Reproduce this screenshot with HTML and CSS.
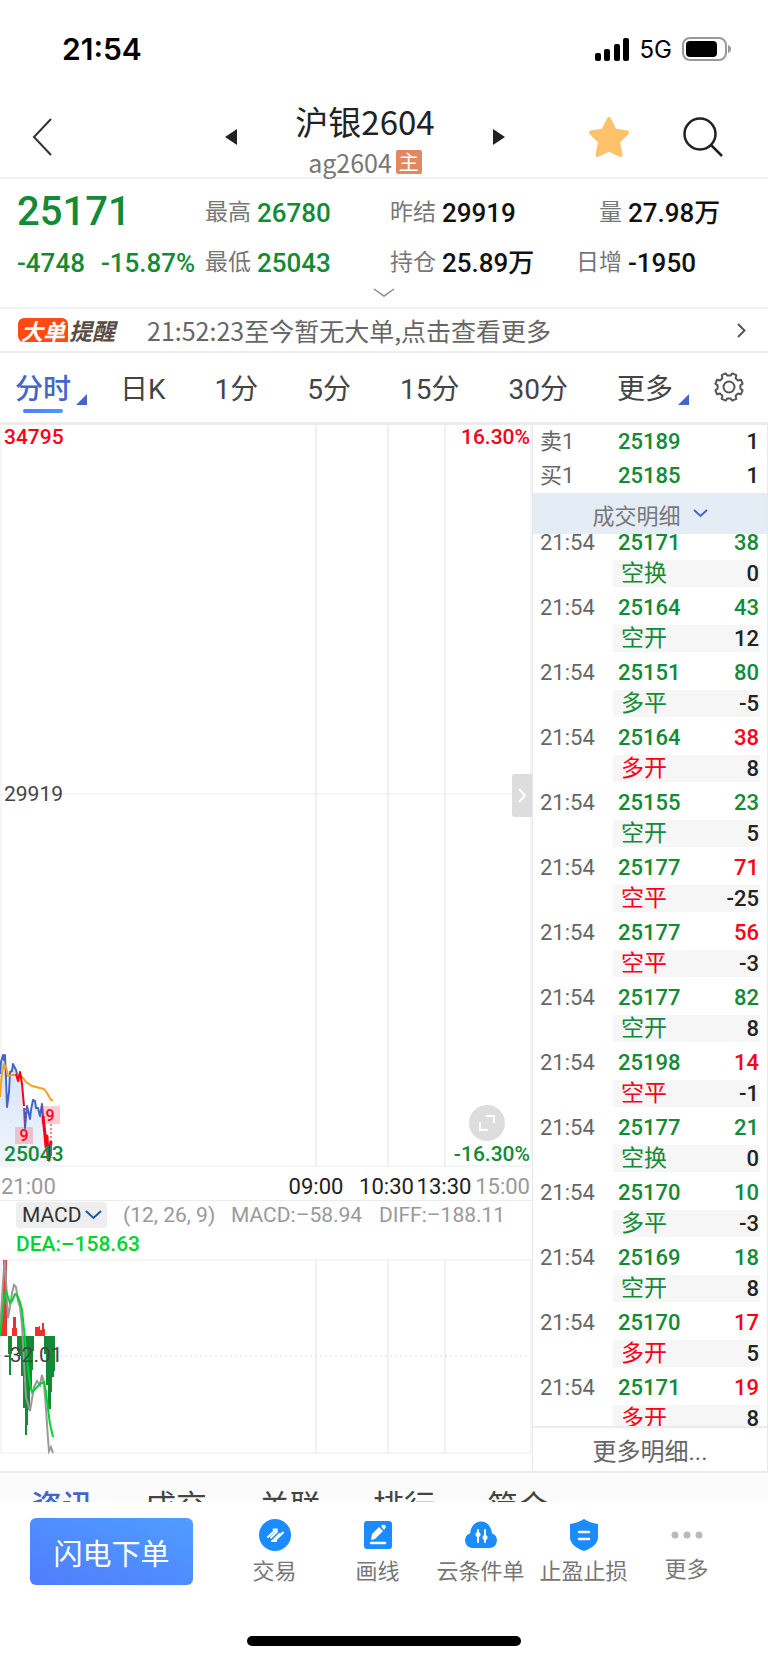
FILE: index.html
```
<!DOCTYPE html>
<html lang="zh-CN">
<head>
    <meta charset="UTF-8">
    <meta name="viewport" content="width=device-width, initial-scale=1.0">
    <title>沪银2604</title>
    <link rel="stylesheet" href="styles.css">
</head>
<body>

<div class="status-bar">
    <span class="clock">21:54</span>
    <div class="status-icons">
        <svg width="35" height="23" viewBox="0 0 35 23">
            <rect x="0" y="15" width="6" height="8" rx="2"/>
            <rect x="9" y="11" width="6" height="12" rx="2"/>
            <rect x="19" y="6" width="6" height="17" rx="2"/>
            <rect x="28" y="0" width="6" height="23" rx="2"/>
        </svg>
        <span class="network">5G</span>
        <svg width="49" height="24" viewBox="0 0 49 24">
            <rect x="1" y="1" width="43" height="22" rx="7" fill="none" stroke="#999" stroke-width="2"/>
            <rect x="4" y="4" width="31" height="16" rx="4"/>
            <path d="M46 8q3 1 3 4t-3 4z" fill="#999"/>
        </svg>
    </div>
</div>

<header class="nav">
    <button class="icon-btn back" aria-label="返回">
        <svg width="20" height="38" viewBox="0 0 20 38"><path d="M19 1L2 19l17 18" fill="none" stroke="#333" stroke-width="2"/></svg>
    </button>
    <button class="icon-btn prev" aria-label="上一个">
        <svg width="12" height="16" viewBox="0 0 12 16"><path d="M12 0v16L0 8z" fill="#222"/></svg>
    </button>
    <div class="nav-title">
        <h1>沪银2604</h1>
        <p>ag2604<span class="main-badge">主</span></p>
    </div>
    <button class="icon-btn next" aria-label="下一个">
        <svg width="12" height="16" viewBox="0 0 12 16"><path d="M0 0v16l12-8z" fill="#222"/></svg>
    </button>
    <button class="icon-btn star" aria-label="自选">
        <svg width="42" height="42" viewBox="0 0 42 42"><path d="M21 3l5.600 11.500L39 16.500l-9 9L32.500 39 21 33.500 9.500 39 12 25.500l-9-9 12.400-2z" fill="#ffc26a" stroke="#ffc26a" stroke-width="4" stroke-linejoin="round"/></svg>
    </button>
    <button class="icon-btn search" aria-label="搜索">
        <svg width="40" height="40" viewBox="0 0 40 40"><circle cx="17" cy="17" r="15.500" fill="none" stroke="#222" stroke-width="2.500"/><path d="M28 28l11 11" stroke="#222" stroke-width="2.500"/></svg>
    </button>
</header>

<section class="quote">
    <div class="last green">25171</div>
    <div class="item"><span>最高</span><b class="green">26780</b></div>
    <div class="item"><span>昨结</span><b>29919</b></div>
    <div class="item"><span class="right">量</span><b>27.98万</b></div>
    <div class="change green"><span>-4748</span><span>-15.87%</span></div>
    <div class="item"><span>最低</span><b class="green">25043</b></div>
    <div class="item"><span>持仓</span><b>25.89万</b></div>
    <div class="item"><span class="right">日增</span><b>-1950</b></div>
    <button class="icon-btn expand" aria-label="展开">
        <svg width="22" height="10" viewBox="0 0 22 10"><path d="M1 1l10 7 10-7" fill="none" stroke="#888" stroke-width="1.500"/></svg>
    </button>
</section>

<a class="alert" href="#">
    <span class="alert-badge">大单</span>
    <span class="alert-name">提醒</span>
    <span class="alert-text">21:52:23至今暂无大单,点击查看更多</span>
    <svg width="9" height="15" viewBox="0 0 9 15"><path d="M1 1l6.500 6.500L1 14" fill="none" stroke="#555" stroke-width="2"/></svg>
</a>

<nav class="periods">
    <button class="active corner">分时</button>
    <button>日K</button>
    <button>1分</button>
    <button>5分</button>
    <button>15分</button>
    <button>30分</button>
    <button class="corner">更多</button>
    <button class="settings" aria-label="设置">
        <svg width="30" height="30" viewBox="0 0 30 30" fill="none" stroke="#555" stroke-width="2" stroke-linejoin="round">
            <path d="M26.400 13.400v3.200l2.200 1.700-1.700 4-3.100-.700-2.200 2.200.700 3.100-4 1.700-1.700-2.200h-3.200l-1.700 2.200-4-1.700.700-3.100-2.200-2.200-3.100.700-1.700-4 2.200-1.700v-3.200l-2.200-1.700 1.700-4 3.100.700 2.200-2.200-.700-3.100 4-1.700 1.700 2.200h3.200l1.700-2.200 4 1.700-.700 3.100 2.200 2.200 3.100-.700 1.700 4z"/>
            <circle cx="15" cy="15" r="5.500"/>
        </svg>
    </button>
</nav>

<main class="board">
    <div class="charts">
        <div class="price-chart">
            <svg viewBox="0 0 532 742">
                <defs>
                    <linearGradient id="area" x1="0" y1="0" x2="0" y2="1">
                        <stop offset="0" stop-color="#d3e1f7"/>
                        <stop offset="1" stop-color="#f1f6fd"/>
                    </linearGradient>
                </defs>
                <path class="grid-v" d="M316 0v742M388 0v742M445 0v742"/>
                <path class="grid-h" d="M0 369h530M1 0v741h530V0"/>
                <g transform="translate(0 615)" fill="none" stroke-width="2" stroke-linejoin="round">
                    <path fill="url(#area)" d="M0 36L3 15 5 16 7 67 10 32 13 24 18 38 20 32 22 44 25 88 27 66 30 79 34 62 38 67 40 76 42 64 45 95 48 118 52 117V125H0z"/>
                    <path stroke="#4466c9" d="M0 34L1 22 3 15 4 20 5 15 6 38 7 67 9 52 10 32 12 31 13 24 16 30 18 38"/>
                    <path stroke="#f9a01b" d="M0 57L2 32 4 24 6 27 8 36 12 35 20 35 23 38 26 42 32 46 44 49 47 53 51 60 53 60"/>
                    <path stroke="#fb0017" d="M16 34L18 41 20 32 22 44 24 66"/>
                    <path stroke="#4466c9" d="M24 68L25 88 27 66 28 70 30 79 31 70 33 60 35 61 36 68 38 68 40 76 42 64 43 76"/>
                    <path stroke="#fb0017" stroke-width="3" d="M43 76L45 95 46 107 47 96 48 118 49 120 50 108 51 101"/>
                    <path stroke="#4466c9" d="M51 105v11"/>
                    <path stroke="#fb0017" stroke-width="1" stroke-dasharray="2 2" d="M25 68v20M51 84v18"/>
                </g>
                <rect class="mark" x="15" y="702" width="18" height="17" rx="1"/>
                <rect class="mark" x="41" y="681" width="19" height="18" rx="1"/>
                <text class="mark-text" x="24" y="716">9</text>
                <text class="mark-text" x="50" y="696">9</text>
            </svg>
            <span class="tag top-left red">34795</span>
            <span class="tag top-right red">16.30%</span>
            <span class="tag middle">29919</span>
            <span class="tag bottom-left green">25043</span>
            <span class="tag bottom-right green">-16.30%</span>
            <button class="icon-btn drawer" aria-label="收起盘口">
                <svg width="9" height="15" viewBox="0 0 9 15"><path d="M1 1l6 6.500L1 14" fill="none" stroke="#fff" stroke-width="2"/></svg>
            </button>
            <button class="icon-btn fullscreen" aria-label="全屏">
                <svg width="16" height="16" viewBox="0 0 16 16"><path d="M7 1h8v7M1 7v8h8" fill="none" stroke="#fff" stroke-width="2"/></svg>
            </button>
        </div>

        <div class="time-axis">
            <span class="muted">21:00</span>
            <span>09:00</span>
            <span>10:30</span>
            <span>13:30</span>
            <span class="muted">15:00</span>
        </div>

        <div class="indicator">
            <div class="picker">
                <select aria-label="指标"><option>MACD</option></select>
                <svg width="17" height="10" viewBox="0 0 17 10"><path d="M1 1l7.500 7L16 1" fill="none" stroke="#1558a8" stroke-width="2"/></svg>
            </div>
            <span>(12, 26, 9)</span>
            <span>MACD:–58.94</span>
            <span>DIFF:–188.11</span>
            <span class="dea">DEA:–158.63</span>
        </div>

        <div class="macd-chart">
            <svg viewBox="0 0 532 195">
                <path class="grid-v" d="M316 0v194M388 0v194M445 0v194"/>
                <path class="grid-h" d="M1 1h530v193H1z"/>
                <path d="M0 97h530" stroke="#ddd" stroke-dasharray="2 3"/>
                <path fill="#f0302e" d="M0 77L3 30V1h4v76zM12 77v-8h1V58h3v11h1v8zM35 77v-9h4v-1h1v4h2v-7h2v6h1v7z"/>
                <path fill="#128a36" d="M8 77v18h1v21h2V95h1V77zM17 77v15h2v5h2v20h2v32h2v27h2v-10h1v-15h2v-20h2v-20h1V92h1V77zM44 77v18h2v31h2v24h3v-17h1v-15h2v-6h1V77z"/>
                <path fill="none" stroke="#999" stroke-width="2" d="M0 70L2 40 4 8 5 1 6 20 8 59 10 48 12 34 14 26 16 28 18 42 20 48 22 66 24 103 26 138 28 145 30 152 32 140 34 128 37 122 40 126 42 116 44 124 46 150 48 180 49 192 51 188 53 194"/>
                <path fill="none" stroke="#00d42b" stroke-width="2" d="M0 77L2 60 4 40 6 32 8 38 10 44 12 42 15 35 17 36 20 43 22 51 24 70 26 91 28 110 30 125 32 133 36 129 40 125 44 123 46 133 48 150 50 165 53 178"/>
            </svg>
            <span class="tag center">-32.01</span>
        </div>
    </div>

    <aside class="orders">
        <table class="depth">
            <tr><th>卖1</th><td class="green">25189</td><td class="num">1</td></tr>
            <tr><th>买1</th><td class="green">25185</td><td class="num">1</td></tr>
        </table>
        <button class="ticks-head">成交明细
            <svg width="15" height="9" viewBox="0 0 15 9"><path d="M1 1l6.500 6L14 1" fill="none" stroke="#4466c9" stroke-width="2"/></svg>
        </button>
        <div class="ticks">
            <table>
                <tr><td>21:54</td><td class="green">25171</td><td class="num green">38</td></tr>
                <tr class="kind"><td></td><td class="green">空换</td><td class="num">0</td></tr>
                <tr><td>21:54</td><td class="green">25164</td><td class="num green">43</td></tr>
                <tr class="kind"><td></td><td class="green">空开</td><td class="num">12</td></tr>
                <tr><td>21:54</td><td class="green">25151</td><td class="num green">80</td></tr>
                <tr class="kind"><td></td><td class="green">多平</td><td class="num">-5</td></tr>
                <tr><td>21:54</td><td class="green">25164</td><td class="num red">38</td></tr>
                <tr class="kind"><td></td><td class="red">多开</td><td class="num">8</td></tr>
                <tr><td>21:54</td><td class="green">25155</td><td class="num green">23</td></tr>
                <tr class="kind"><td></td><td class="green">空开</td><td class="num">5</td></tr>
                <tr><td>21:54</td><td class="green">25177</td><td class="num red">71</td></tr>
                <tr class="kind"><td></td><td class="red">空平</td><td class="num">-25</td></tr>
                <tr><td>21:54</td><td class="green">25177</td><td class="num red">56</td></tr>
                <tr class="kind"><td></td><td class="red">空平</td><td class="num">-3</td></tr>
                <tr><td>21:54</td><td class="green">25177</td><td class="num green">82</td></tr>
                <tr class="kind"><td></td><td class="green">空开</td><td class="num">8</td></tr>
                <tr><td>21:54</td><td class="green">25198</td><td class="num red">14</td></tr>
                <tr class="kind"><td></td><td class="red">空平</td><td class="num">-1</td></tr>
                <tr><td>21:54</td><td class="green">25177</td><td class="num green">21</td></tr>
                <tr class="kind"><td></td><td class="green">空换</td><td class="num">0</td></tr>
                <tr><td>21:54</td><td class="green">25170</td><td class="num green">10</td></tr>
                <tr class="kind"><td></td><td class="green">多平</td><td class="num">-3</td></tr>
                <tr><td>21:54</td><td class="green">25169</td><td class="num green">18</td></tr>
                <tr class="kind"><td></td><td class="green">空开</td><td class="num">8</td></tr>
                <tr><td>21:54</td><td class="green">25170</td><td class="num red">17</td></tr>
                <tr class="kind"><td></td><td class="red">多开</td><td class="num">5</td></tr>
                <tr><td>21:54</td><td class="green">25171</td><td class="num red">19</td></tr>
                <tr class="kind"><td></td><td class="red">多开</td><td class="num">8</td></tr>
            </table>
        </div>
        <a class="ticks-more" href="#">更多明细...</a>
    </aside>
</main>

<nav class="info-tabs">
    <a class="active" href="#">资讯</a>
    <a href="#">成交</a>
    <a href="#">关联</a>
    <a href="#">排行</a>
    <a href="#">简介</a>
</nav>

<footer class="toolbar">
    <button class="order-btn">闪电下单</button>
    <a href="#">
        <svg width="32" height="32" viewBox="0 0 32 32"><circle cx="16" cy="16" r="16" fill="#1a8cff"/><path d="M9 18l8-7.500M14.500 10.500H18M24 13.500L15.500 22M13 22h4M12 18.500l6-6M14.500 21l6-6" fill="none" stroke="#fff" stroke-width="2" stroke-linecap="round"/></svg>
        <span>交易</span>
    </a>
    <a href="#">
        <svg width="32" height="32" viewBox="0 0 32 32"><rect x="2" y="2" width="28" height="28" rx="3" fill="#1a8cff"/><path d="M9 21l1-6 7-7 4 4-8 8zM19 7l1-1q3-1 4 2l-2 3z" fill="#fff"/><path d="M9 24h14" stroke="#fff" stroke-width="2.500" stroke-linecap="round"/></svg>
        <span>画线</span>
    </a>
    <a href="#">
        <svg width="32" height="32" viewBox="0 0 32 32"><path d="M7 29a7.500 7.500 0 0 1-2-14.500C6 7 10 2.500 16 2.500S26 7 27 14.500A7.500 7.500 0 0 1 25 29z" fill="#1a8cff"/><path d="M13 11v12M20 11v12" stroke="#fff" stroke-width="2" stroke-linecap="round"/><circle cx="13" cy="15.500" r="2.500" fill="#fff"/><circle cx="20" cy="18.500" r="2.500" fill="#fff"/></svg>
        <span>云条件单</span>
    </a>
    <a href="#">
        <svg width="32" height="32" viewBox="0 0 32 32"><path d="M16 0q6 4 14 5v13q0 9-14 14Q2 27 2 18V5q8-1 14-5z" fill="#1a8cff"/><path d="M11 13h10M11 20h10" stroke="#fff" stroke-width="2.500" stroke-linecap="round"/></svg>
        <span>止盈止损</span>
    </a>
    <a class="more" href="#">
        <svg width="32" height="32" viewBox="0 0 32 32" fill="#bbb"><circle cx="4" cy="16" r="3.500"/><circle cx="16" cy="16" r="3.500"/><circle cx="28" cy="16" r="3.500"/></svg>
        <span>更多</span>
    </a>
</footer>
<div class="home-bar"></div>

</body>
</html>
```

FILE: styles.css
```
* {
    box-sizing: border-box;
}
body {
    margin: 0;
    background: #fff;
    color: #222;
    font-family: Roboto, "Noto Sans CJK SC", sans-serif;
    font-size: 22px;
}
svg {
    display: block;
}
button {
    padding: 0;
    border: none;
    background: none;
    color: inherit;
    font: inherit;
    cursor: pointer;
}
a {
    color: inherit;
    text-decoration: none;
}
h1, p {
    margin: 0;
    font-weight: 400;
}
table {
    border-collapse: collapse;
}
.green {
    color: #128a36;
}
.red {
    color: #fb0017;
}
.muted {
    color: #999;
}
.icon-btn {
    display: flex;
    align-items: center;
    justify-content: center;
}

/* status bar */
.status-bar {
    display: flex;
    align-items: center;
    justify-content: space-between;
    height: 98px;
    padding: 0 37px 0 62px;
    font-family: Inter, sans-serif;
    color: #000;
}
.clock {
    font-size: 30px;
    font-weight: 600;
}
.status-icons {
    display: flex;
    align-items: center;
    gap: 10px;
}
.network {
    font-size: 24px;
}

/* title bar */
.nav {
    display: grid;
    grid-template-columns: 210px 42px 1fr 42px 44px 90px 98px;
    align-items: center;
    height: 81px;
    padding-right: 16px;
    border-bottom: 2px solid #efefef;
}
.nav .icon-btn {
    padding-bottom: 4px;
}
.nav .back {
    justify-content: flex-start;
    padding-left: 32px;
}
.nav-title {
    text-align: center;
    font-family: "Noto Sans CJK SC", sans-serif;
}
.nav-title h1 {
    font-size: 33px;
    line-height: 46px;
}
.nav-title p {
    display: flex;
    align-items: center;
    justify-content: center;
    gap: 4px;
    color: #777;
    font-size: 25px;
    line-height: 36px;
}
.main-badge {
    width: 26px;
    background: #e08860;
    border-radius: 2px;
    color: #fff;
    font-size: 20px;
    line-height: 24px;
}
.star {
    grid-column: 6;
}

/* quote */
.quote {
    display: grid;
    grid-template-columns: 188px 185px 170px 1fr;
    grid-template-rows: 50px 50px 28px;
    align-items: center;
    height: 130px;
    padding-left: 17px;
    border-bottom: 2px solid #f2f2f2;
    font-weight: 500;
}
.last {
    font-size: 40px;
    line-height: 44px;
    margin-top: 16px;
}
.quote .item {
    display: flex;
    align-items: center;
    gap: 6px;
    color: #111;
}
.quote .item span {
    color: #777;
    font-size: 23px;
    font-weight: 400;
    line-height: 30px;
}
.quote .item b {
    font-size: 26px;
    font-weight: 500;
    line-height: 30px;
}
.quote .item .right {
    width: 62px;
    text-align: right;
}
.quote .item .green {
    color: #128a36;
}
.quote .item,
.change {
    padding-top: 18px;
}
.change {
    display: flex;
    gap: 16px;
    font-size: 26px;
}
.expand {
    grid-column: 1 / -1;
    margin-right: 17px;
}

/* big order alert */
.alert {
    display: flex;
    align-items: center;
    height: 44px;
    padding: 0 22px 0 18px;
    border-bottom: 2px solid #efefef;
    color: #666;
    font-family: "Noto Sans CJK SC", sans-serif;
}
.alert-badge {
    padding: 0 3px;
    background: #ff4a14;
    border-radius: 6px 6px 0 6px;
    color: #fff;
    font-size: 22px;
    font-style: italic;
    font-weight: 700;
    line-height: 24px;
}
.alert-name {
    margin: 0 32px 0 1px;
    color: #5a4a42;
    font-size: 23px;
    font-style: italic;
    font-weight: 700;
}
.alert-text {
    flex: 1;
    font-size: 25px;
    white-space: nowrap;
}

/* periods */
.periods {
    display: flex;
    align-items: center;
    justify-content: space-between;
    height: 72px;
    padding: 0 24px 2px 15px;
    border-bottom: 3px solid #ececec;
    color: #444;
    font-size: 28px;
}
.periods button {
    position: relative;
}
.periods .active {
    color: #4466c9;
    font-weight: 500;
}
.periods .active::before {
    content: "";
    position: absolute;
    left: 8px;
    bottom: -6px;
    width: 40px;
    height: 4px;
    border-radius: 2px;
    background: linear-gradient(90deg, #4f7cff, #4a9bff);
}
.periods .corner::after {
    content: "";
    position: absolute;
    right: -16px;
    bottom: 2px;
    border-left: 11px solid transparent;
    border-bottom: 11px solid #4466c9;
}
.periods .settings {
    margin-left: -8px;
}

/* charts */
.board {
    display: flex;
    border-bottom: 2px solid #ececec;
}
.charts {
    flex: 1;
}
.charts svg {
    overflow: visible;
}
.price-chart,
.macd-chart {
    position: relative;
}
.price-chart > svg,
.macd-chart > svg {
    width: 100%;
}
.grid-v {
    stroke: #dde1f5;
    stroke-width: 1;
}
.grid-h {
    fill: none;
    stroke: #ececf0;
    stroke-width: 1;
}
.mark {
    fill: #fb0017;
    fill-opacity: .2;
}
.mark-text {
    fill: #fb0017;
    font-size: 16px;
    font-weight: 500;
    text-anchor: middle;
}
.tag {
    position: absolute;
    left: 4px;
    font-size: 21px;
    font-weight: 500;
    line-height: 24px;
}
.top-left,
.top-right {
    top: 0;
}
.top-right,
.bottom-right {
    left: auto;
    right: 2px;
}
.middle,
.center {
    top: 50%;
    margin-top: -14px;
    color: #444;
    font-weight: 400;
}
.bottom-left,
.bottom-right {
    bottom: 1px;
}
.drawer {
    position: absolute;
    top: 349px;
    right: 0;
    width: 20px;
    height: 43px;
    border-radius: 3px 0 0 3px;
    background: #ddd;
}
.fullscreen {
    position: absolute;
    right: 27px;
    bottom: 26px;
    width: 36px;
    height: 36px;
    border-radius: 50%;
    background: #ddd;
}
.time-axis {
    display: grid;
    grid-template-columns:
        minmax(0, 284fr) minmax(0, 64fr) minmax(0, 77fr)
        minmax(0, 38fr) minmax(0, 67fr);
    align-items: center;
    justify-items: center;
    height: 34px;
    padding: 6px 2px 0 0;
    border-bottom: 1px solid #ececec;
    white-space: nowrap;
}
.time-axis span:first-child {
    justify-self: start;
    padding-left: 1px;
}
.time-axis span:last-child {
    justify-self: end;
}
.indicator {
    display: grid;
    grid-template-columns: 107px 108px 148px 1fr;
    grid-template-rows: 28px 30px;
    align-items: center;
    height: 58px;
    padding-left: 16px;
    color: #999;
    font-size: 21px;
}
.picker {
    position: relative;
    width: 91px;
    height: 26px;
}
.picker select {
    width: 100%;
    height: 26px;
    padding: 0 0 0 6px;
    appearance: none;
    border: none;
    border-radius: 4px;
    background: #eee;
    color: #333;
    font: inherit;
}
.picker svg {
    position: absolute;
    top: 8px;
    right: 5px;
}
.dea {
    grid-column: 1 / -1;
    color: #00d42b;
    font-weight: 500;
}

/* order book */
.orders {
    width: 236px;
    border-left: 1px solid #e8e8e8;
    border-right: 1px solid #e8e8e8;
}
.orders table {
    width: calc(100% - 7px);
    table-layout: fixed;
}
.orders td,
.orders th {
    padding: 0;
    font-weight: 500;
    line-height: 26px;
    text-align: left;
}
.orders td:first-child,
.orders th {
    width: 80px;
    padding-left: 7px;
    color: #666;
    font-weight: 400;
}
.orders td:nth-child(2) {
    width: 86px;
    padding-left: 5px;
}
.orders .num {
    padding-right: 1px;
    text-align: right;
}
.depth tr {
    height: 34px;
}
.ticks-head {
    display: flex;
    align-items: center;
    justify-content: center;
    gap: 12px;
    width: 100%;
    height: 41px;
    background: #e4ecf5;
    color: #777;
}
.ticks {
    height: 892px;
    overflow: hidden;
}
.ticks table {
    margin-top: -12px;
}
.ticks tr {
    height: 38px;
}
.ticks td {
    padding-top: 4px;
}
.ticks .kind {
    height: 27px;
}
.ticks .kind td {
    padding-top: 0;
}
.kind td:nth-child(n+2) {
    background: #f6f6f6;
}
.ticks .kind td:nth-child(2) {
    padding-left: 8px;
    font-size: 23px;
    font-weight: 400;
}
.ticks-more {
    display: flex;
    align-items: center;
    justify-content: center;
    height: 45px;
    border-top: 2px solid #ececec;
    color: #666;
    font-size: 24px;
}

/* lower tabs run under the toolbar */
.info-tabs {
    display: flex;
    gap: 52px;
    height: 29px;
    padding: 16px 31px 0;
    overflow: hidden;
    background: #fbfbfb;
    color: #444;
    font-size: 31px;
    line-height: 36px;
}
.info-tabs .active {
    color: #4466c9;
    font-weight: 500;
}

.toolbar {
    display: grid;
    grid-template-columns: 193px repeat(5, 1fr);
    padding: 16px 30px 0;
    height: 134px;
    background: #fff;
}
.order-btn {
    width: 163px;
    height: 67px;
    border-radius: 6px;
    background: linear-gradient(20deg, #507dfd, #4f9dff);
    color: #fff;
    font-size: 29px;
}
.toolbar a {
    display: flex;
    flex-direction: column;
    align-items: center;
    gap: 5px;
    padding-top: 1px;
    color: #777;
    line-height: 32px;
    white-space: nowrap;
}
.toolbar .more {
    gap: 3px;
}
.home-bar {
    width: 274px;
    height: 10px;
    margin: 0 auto 17px;
    border-radius: 5px;
    background: #000;
}
```
